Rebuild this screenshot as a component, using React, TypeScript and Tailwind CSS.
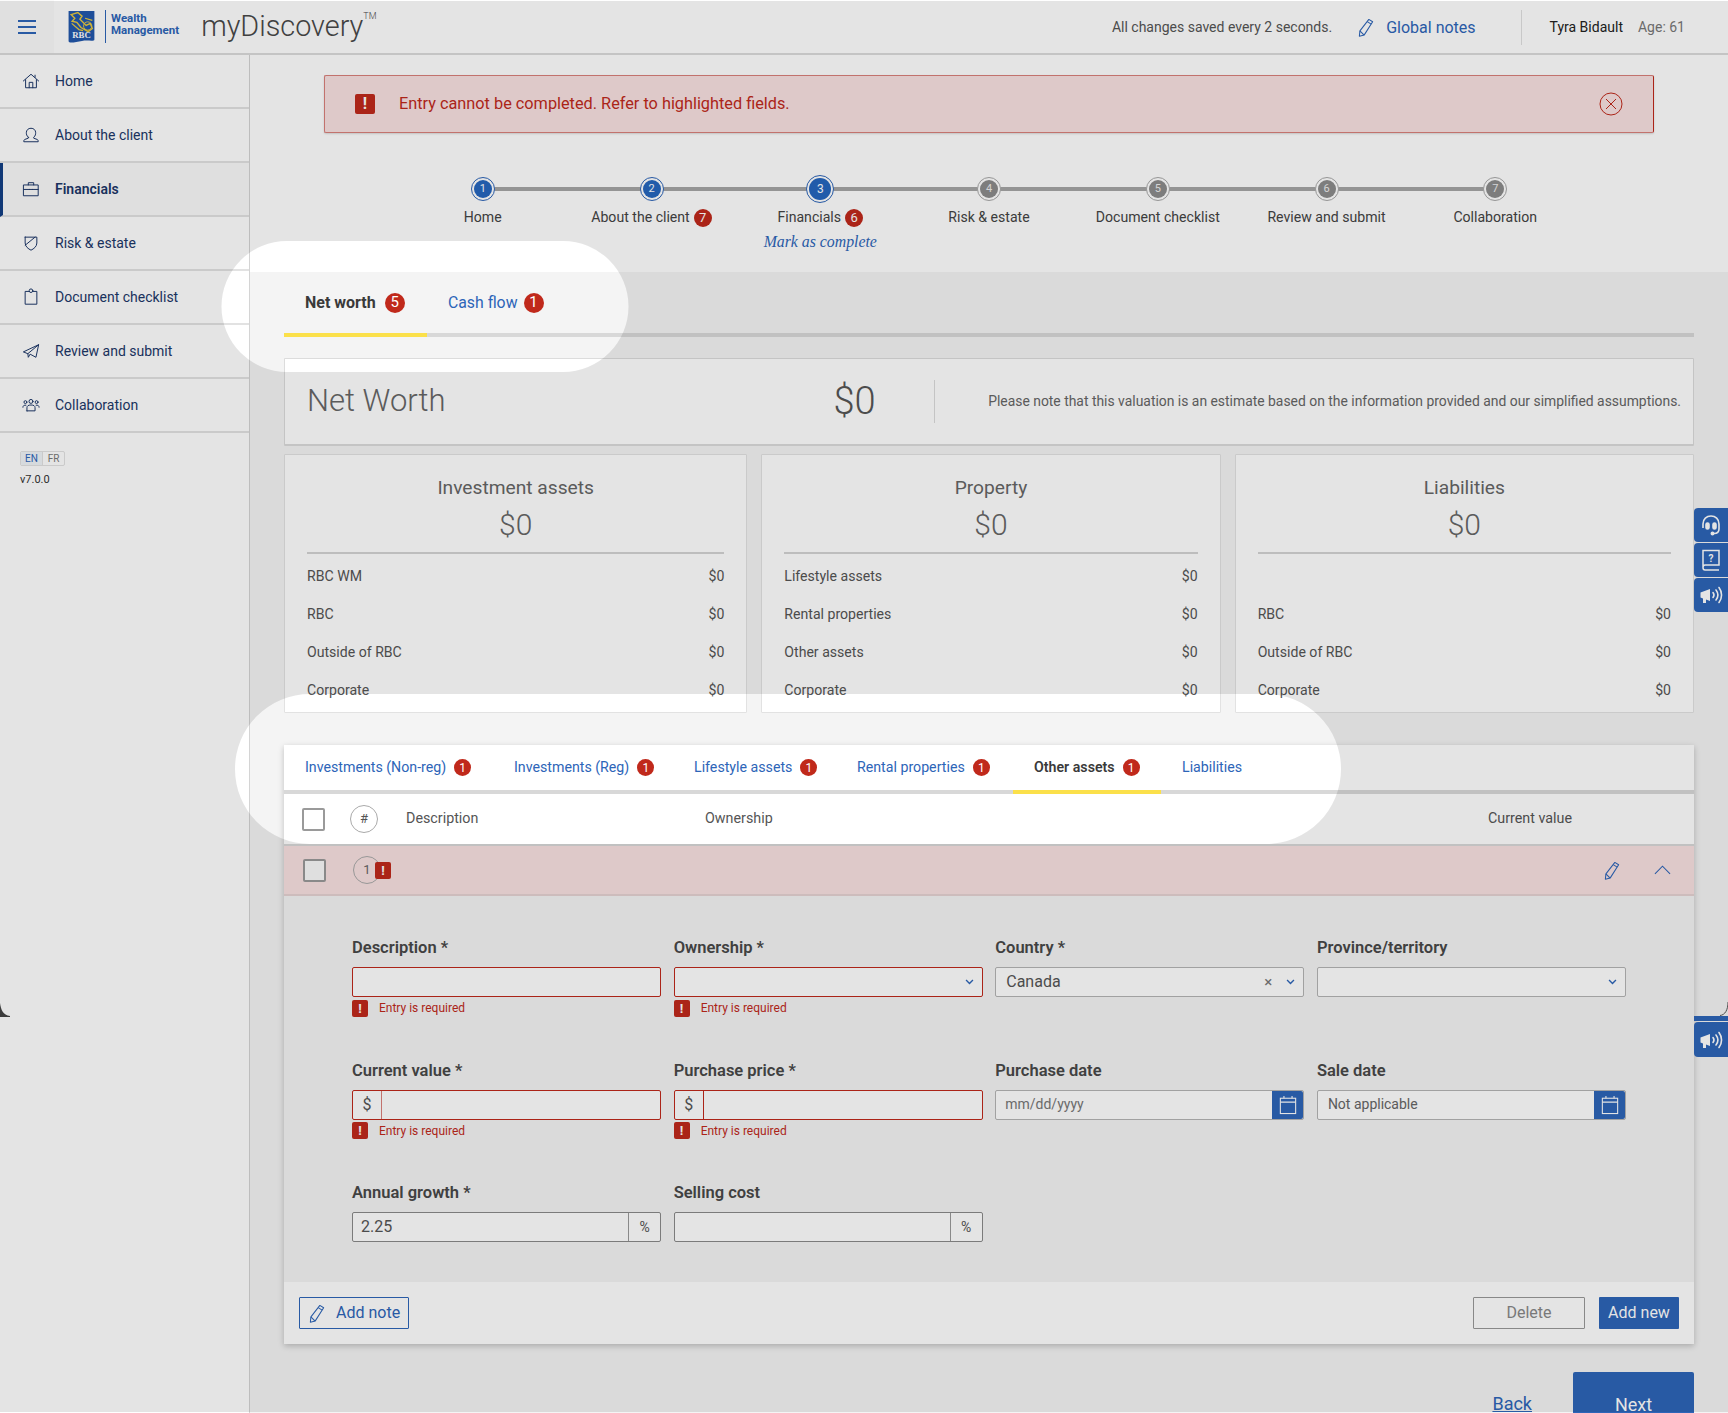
import React from "react";

const BLUE = "#2d65b8";

function Badge({ n, size = "md" }: { n: number; size?: "md" | "sm" }) {
  return (
    <span
      className={
        size === "md"
          ? "inline-flex h-5 w-5 items-center justify-center rounded-full bg-[#c0291b] text-[15px] font-normal leading-none text-white"
          : "inline-flex h-[17px] w-[17px] items-center justify-center rounded-full bg-[#c0291b] text-[12px] font-normal leading-none text-white"
      }
    >
      {n}
    </span>
  );
}

function ErrIcon({ cls }: { cls: string }) {
  return (
    <span className={`inline-flex items-center justify-center rounded-[2px] bg-[#c0291b] font-bold leading-none text-white ${cls}`}>!</span>
  );
}

function Pencil({ cls, color = BLUE }: { cls: string; color?: string }) {
  return (
    <svg viewBox="0 0 18 20" className={cls} fill="none" stroke={color} strokeWidth="1.1" strokeLinejoin="round">
      <path d="M12 1.5 16 4 7 18 2 19.2 2.6 13.5 12 1.5Z" />
      <path d="M10.3 3.8 14.4 6.4" />
      <path d="M2.6 13.5 7 18" />
    </svg>
  );
}

function Chevron({ cls }: { cls?: string }) {
  return (
    <svg viewBox="0 0 10 7" className={`h-[6px] w-[9px] ${cls ?? ""}`} fill="none" stroke={BLUE} strokeWidth="1.6">
      <path d="M1 1.2 5 5.2 9 1.2" />
    </svg>
  );
}

function Calendar() {
  return (
    <span className="flex h-full w-[31px] items-center justify-center rounded-r-[2px] bg-[#2d65b8]">
      <svg viewBox="0 0 20 22" className="h-[20px] w-[18px]" fill="none" stroke="#fff" strokeWidth="1.2">
        <rect x="1.5" y="3.5" width="17" height="17" />
        <path d="M1.5 7.8H18.5M5.5 1V3.5M14.5 1V3.5" />
      </svg>
    </span>
  );
}

const navIconProps = { viewBox: "0 0 20 20", className: "h-[18px] w-[18px] shrink-0", fill: "none", stroke: "#1c3768", strokeWidth: 1.1, strokeLinejoin: "round" as const, strokeLinecap: "round" as const };

const navIcons: Record<string, React.ReactNode> = {
  home: (
    <svg {...navIconProps}>
      <path d="M1.5 10 10 2.5 18.5 10M4 8.5V17.5H16V8.5M8 17.5V11.5H12V17.5M14.5 3.5V6" />
    </svg>
  ),
  person: (
    <svg {...navIconProps}>
      <path d="M7 12.5C5 11 4.8 8.8 4.8 7.5 4.8 4.5 7 2.5 10 2.5S15.2 4.5 15.2 7.5C15.2 8.8 15 11 13 12.5V13.5L17 15C17.8 15.4 18 16 18 17.5H2C2 16 2.2 15.4 3 15L7 13.5V12.5Z" />
    </svg>
  ),
  brief: (
    <svg {...navIconProps}>
      <rect x="2" y="5.5" width="16" height="12" />
      <path d="M7 5.5V3H13V5.5M2 10.5H8.5M11.5 10.5H18M8.5 10.5H11.5" />
    </svg>
  ),
  shield: (
    <svg {...navIconProps}>
      <path d="M3.5 3.5H16.5V10C16.5 14 13 16.5 10 18 7 16.5 3.5 14 3.5 10V3.5Z" />
      <path d="M3.5 12.5 14.5 3.5" />
    </svg>
  ),
  clip: (
    <svg {...navIconProps}>
      <path d="M7.5 3.8H3.5V18H16.5V3.8H12.5" />
      <circle cx="10" cy="3" r="2" />
    </svg>
  ),
  plane: (
    <svg {...navIconProps}>
      <path d="M18.5 3 1.5 11 6.5 13 18.5 3 15.5 17 9 13.5 7 17 6.5 13" />
    </svg>
  ),
  people: (
    <svg {...navIconProps}>
      <circle cx="10" cy="6" r="2.2" />
      <circle cx="3.8" cy="6.8" r="1.6" />
      <circle cx="16.2" cy="6.8" r="1.6" />
      <path d="M5.5 16.5V13C5.5 11 7 10 10 10S14.5 11 14.5 13V16.5H5.5ZM1 12.5C1 10.6 2.3 10 4.3 10.2M19 12.5C19 10.6 17.7 10 15.7 10.2" />
    </svg>
  ),
};

const navItems = [
  ["Home", "home"],
  ["About the client", "person"],
  ["Financials", "brief"],
  ["Risk & estate", "shield"],
  ["Document checklist", "clip"],
  ["Review and submit", "plane"],
  ["Collaboration", "people"],
];

function Logo() {
  return (
    <svg viewBox="0 0 26 31" className="h-[32px] w-[28px] shrink-0">
      <path d="M0 0H25V27.5C25 30 19 28 13 29 7 30 0 32 0 29V0Z" fill="#2258ac" />
      <path d="M2.5 3.5 9 1.5 13 5 11 8 17 14 21 12 23 17 19 20 12 16 8 11 3.5 10 6 7 2.5 3.5Z" fill="none" stroke="#e9c93f" strokeWidth="1.4" />
      <path d="M3 12 10 18 14 19M16 7 23 9" fill="none" stroke="#e9c93f" strokeWidth="1.2" />
      <circle cx="18.5" cy="14.5" r="4" fill="none" stroke="#e9c93f" strokeWidth="0.9" />
      <text x="12.5" y="26.5" textAnchor="middle" fill="#fff" fontSize="8.5" fontWeight="700" fontFamily="Liberation Serif, serif">RBC</text>
    </svg>
  );
}

const steps = [
  { n: 1, label: "Home", state: "done" },
  { n: 2, label: "About the client", state: "done", badge: 7 },
  { n: 3, label: "Financials", state: "active", badge: 6, mark: true },
  { n: 4, label: "Risk & estate", state: "todo" },
  { n: 5, label: "Document checklist", state: "todo" },
  { n: 6, label: "Review and submit", state: "todo" },
  { n: 7, label: "Collaboration", state: "todo" },
];

function StepDot({ n, state }: { n: number; state: string }) {
  if (state === "active")
    return (
      <span className="flex h-7 w-7 items-center justify-center rounded-full border border-[#2d65b8] bg-white">
        <span className="flex h-[22px] w-[22px] items-center justify-center rounded-full bg-[#2666bf] text-[12px] text-white">{n}</span>
      </span>
    );
  if (state === "done")
    return (
      <span className="flex h-6 w-6 items-center justify-center rounded-full border border-[#2d65b8] bg-white">
        <span className="flex h-[18px] w-[18px] items-center justify-center rounded-full bg-[#2666bf] text-[11px] text-white">{n}</span>
      </span>
    );
  return (
    <span className="flex h-6 w-6 items-center justify-center rounded-full border border-[#a8a8a8] bg-white">
      <span className="flex h-[18px] w-[18px] items-center justify-center rounded-full bg-[#8c8c8c] text-[11px] text-[#eee]">{n}</span>
    </span>
  );
}

function SummaryCard({ title, rows }: { title: string; rows: [string, boolean][] }) {
  return (
    <div className="h-[259px] rounded-[1px] border border-[#e2e2e2] bg-white px-[22px]">
      <div className="mt-[20px] text-center text-[19.2px] leading-[26px] text-[#666]">{title}</div>
      <div className="mt-[5px] text-center text-[30px] font-light leading-[38px] text-[#666]">$0</div>
      <div className="mt-[8px] h-[2px] bg-[#d4d4d4]" />
      <div className="mt-[4px]">
        {rows.map(([label, show], i) => (
          <div key={i} className="flex h-[38px] items-center justify-between text-[14.1px] text-[#555]">
            {show ? (
              <>
                <span>{label}</span>
                <span>$0</span>
              </>
            ) : null}
          </div>
        ))}
      </div>
    </div>
  );
}

const lowerTabs: { label: string; w: string; badge: boolean; active?: boolean }[] = [
  { label: "Investments (Non-reg)", w: "w-[209px]", badge: true },
  { label: "Investments (Reg)", w: "w-[180px]", badge: true },
  { label: "Lifestyle assets", w: "w-[163px]", badge: true },
  { label: "Rental properties", w: "w-[177px]", badge: true },
  { label: "Other assets", w: "w-[148px]", badge: true, active: true },
  { label: "Liabilities", w: "w-[120px]", badge: false },
];

function Label({ text, req }: { text: string; req?: boolean }) {
  return (
    <div className="h-6 text-[16.5px] font-semibold leading-6 text-[#484848]">
      {text}
      {req ? " *" : ""}
    </div>
  );
}

function ErrorLine() {
  return (
    <div className="mt-[2px] flex h-[18px] items-center">
      <ErrIcon cls="h-[17px] w-[16px] text-[13px]" />
      <span className="ml-[11px] text-[12px] text-[#c0291b]">Entry is required</span>
    </div>
  );
}

function Box({ error, children, dark }: { error?: boolean; children?: React.ReactNode; dark?: boolean }) {
  return (
    <div
      className={`mt-[7px] flex h-[30px] items-center rounded-[2px] border bg-white text-[16px] text-[#555] ${
        error ? "border-[#c0291b]" : dark ? "border-[#8a8a8a]" : "border-[#b4b4b4]"
      }`}
    >
      {children}
    </div>
  );
}

function Speaker() {
  return (
    <svg viewBox="0 0 24 24" className="h-[24px] w-[24px]" fill="none" stroke="#fff" strokeWidth="1.6" strokeLinecap="round">
      <path d="M1.5 9.5 11 6V18L7 16.5V20H4V15.5L1.5 14.5Z" fill="#fff" stroke="none" />
      <path d="M14 9.5C15.2 11 15.2 13 14 14.5M17 7C19.3 10 19.3 14 17 17M20 4.5C23.4 9 23.4 15 20 19.5" />
    </svg>
  );
}

export default function App() {
  return (
    <div className="relative h-[1413px] w-full overflow-hidden bg-white font-[Roboto,sans-serif] text-[#333]">
      {/* Header */}
      <header className="flex h-[55px] items-center border-b-2 border-[#dcdcdc] bg-white">
        <div className="flex h-full w-[54px] flex-col items-center justify-center gap-[4px] bg-[#fbfbfb]">
          <span className="h-[2px] w-[18px] bg-[#2d65b8]" />
          <span className="h-[2px] w-[18px] bg-[#2d65b8]" />
          <span className="h-[2px] w-[18px] bg-[#2d65b8]" />
        </div>
        <div className="ml-[14px]">
          <Logo />
        </div>
        <span className="ml-[9px] h-[33px] w-px bg-[#2d65b8]" />
        <div className="-mt-[5px] ml-[5px] text-[11.5px] font-bold leading-[12.5px] text-[#2d65b8]">
          <div>Wealth</div>
          <div>Management</div>
        </div>
        <div className="-mt-[2px] ml-[22px] flex items-start text-[#484848]">
          <span className="text-[28.8px] font-light leading-[36px]">myDiscovery</span>
          <span className="mt-[2px] text-[9px] font-light leading-[12px]">TM</span>
        </div>
        <div className="ml-auto flex items-center pr-[43px] pt-[2px]">
          <span className="text-[14px] text-[#555]">All changes saved every 2 seconds.</span>
          <Pencil cls="ml-[25px] h-[19px] w-[18px]" />
          <span className="ml-[11px] text-[16px] text-[#2d65b8]">Global notes</span>
          <span className="ml-[45px] h-[35px] w-px bg-[#e0e0e0]" />
          <span className="ml-[28px] text-[14px] text-[#222]">Tyra Bidault</span>
          <span className="ml-[15px] text-[14px] text-[#777]">Age: 61</span>
        </div>
      </header>

      <div className="flex">
        {/* Sidebar */}
        <aside className="w-[250px] shrink-0 border-r border-[#d4d4d4] bg-white">
          {navItems.map(([label, icon]) => {
            const active = label === "Financials";
            return (
              <div
                key={label}
                className={`flex h-[54px] items-center border-b-2 border-[#e2e2e2] text-[14px] text-[#1c3768] ${
                  active ? "border-l-[3px] border-l-[#123f85] bg-[#fafafa] pl-[19px] font-semibold" : "pl-[22px]"
                }`}
              >
                {navIcons[icon]}
                <span className="ml-[15px]">{label}</span>
              </div>
            );
          })}
          <div className="ml-[20px] mt-[18px] flex h-[15px] w-[45px] overflow-hidden rounded-[2px] border border-[#e2e2e2] text-[10px] leading-[13px]">
            <span className="flex-1 bg-[#f0f4f8] text-center text-[#2d65b8]">EN</span>
            <span className="flex-1 border-l border-[#e2e2e2] text-center text-[#777]">FR</span>
          </div>
          <div className="ml-[20px] mt-[6px] text-[11px] text-[#333]">v7.0.0</div>
        </aside>

        {/* Main */}
        <main className="min-w-0 flex-1 bg-white">
          <div className="px-[74px] pt-[20px]">
            <div className="flex h-[58px] items-center rounded-[2px] border border-[#d9807a] border-r-[#c0291b] bg-[#f9e1e1] pl-[30px] pr-[30px] shadow-[0_1px_2px_rgba(0,0,0,0.15)]">
              <ErrIcon cls="h-5 w-5 text-[16px]" />
              <span className="ml-[24px] text-[16.3px] text-[#c0291b]">Entry cannot be completed. Refer to highlighted fields.</span>
              <svg viewBox="0 0 24 24" className="ml-auto h-[24px] w-[24px]" fill="none" stroke="#c0291b" strokeWidth="1">
                <circle cx="12" cy="12" r="11" />
                <path d="M7 7 17 17M17 7 7 17" />
              </svg>
            </div>
          </div>

          {/* Stepper */}
          <div className="relative mt-[42px] flex h-[97px] justify-center">
            <div className="relative flex">
              <div className="absolute left-[84px] right-[84px] top-[12px] h-1 bg-[#a6a6a6]" />
              {steps.map((s) => (
                <div key={s.n} className="relative flex w-[168.75px] flex-col items-center">
                  <div className="flex h-7 items-center">
                    <StepDot n={s.n} state={s.state} />
                  </div>
                  <div className="mt-[5px] flex h-5 items-center gap-1 whitespace-nowrap text-[14.1px] text-[#444]">
                    {s.label}
                    {s.badge ? (
                      <span className="inline-flex h-[18px] w-[18px] items-center justify-center rounded-full bg-[#c0291b] text-[13px] text-white">{s.badge}</span>
                    ) : null}
                  </div>
                  {s.mark ? <div className="mt-1 font-['Liberation_Serif',serif] text-[15.8px] italic leading-5 text-[#2d65b8]">Mark as complete</div> : null}
                </div>
              ))}
            </div>
          </div>

          {/* Content */}
          <section className="bg-[#f4f4f4] px-[34px]">
            <div className="flex h-[65px] border-b-4 border-[#d8d8d8]">
              <div className="-mb-1 flex h-[65px] w-[143px] items-center gap-[9px] border-b-4 border-[#fbe04a] pl-[21px] text-[16px] font-bold text-[#3a3a3a]">
                Net worth <Badge n={5} />
              </div>
              <div className="flex h-[61px] items-center gap-[6px] pl-[21px] text-[15.8px] text-[#2d65b8]">
                Cash flow <Badge n={1} />
              </div>
            </div>

            <div className="mt-[21px] flex h-[88px] items-center rounded-[1px] border border-b-2 border-[#dcdcdc] bg-white">
              <span className="ml-[22px] text-[31px] font-light text-[#666]">Net Worth</span>
              <span className="ml-[388px] text-[38px] font-light text-[#555]">$0</span>
              <span className="ml-[58px] h-[43px] w-px bg-[#dcdcdc]" />
              <span className="ml-auto mr-[12px] text-[13.9px] text-[#666]">
                Please note that this valuation is an estimate based on the information provided and our simplified assumptions.
              </span>
            </div>

            <div className="mt-[8px] grid grid-cols-[463fr_459fr_459fr] gap-[14px]">
              <SummaryCard title="Investment assets" rows={[["RBC WM", true], ["RBC", true], ["Outside of RBC", true], ["Corporate", true]]} />
              <SummaryCard title="Property" rows={[["Lifestyle assets", true], ["Rental properties", true], ["Other assets", true], ["Corporate", true]]} />
              <SummaryCard title="Liabilities" rows={[["", false], ["RBC", true], ["Outside of RBC", true], ["Corporate", true]]} />
            </div>

            {/* Table */}
            <div className="mt-[32px] shadow-[0_2px_6px_rgba(0,0,0,0.22)]">
              <div className="flex h-[49px] border-b-4 border-[#d8d8d8] bg-white">
                {lowerTabs.map((t) => (
                  <div
                    key={t.label}
                    className={`-mb-1 flex h-[49px] items-center gap-2 border-b-4 pl-[21px] text-[14.2px] ${t.w} ${
                      t.active ? "border-[#fbe04a] font-semibold text-[#3a3a3a]" : "border-transparent text-[#2d65b8]"
                    }`}
                  >
                    {t.label}
                    {t.badge ? <Badge n={1} size="sm" /> : null}
                  </div>
                ))}
              </div>

              <div className="flex h-[52px] items-center border-b-2 border-[#d8d8d8] bg-white pl-[18px] text-[14.3px] text-[#555]">
                <span className="h-[23px] w-[23px] rounded-[2px] border-2 border-[#9a9a9a] bg-white" />
                <span className="ml-[25px] flex h-7 w-7 items-center justify-center rounded-full border border-[#aaa] text-[13px]">#</span>
                <span className="ml-[28px] w-[299px]">Description</span>
                <span>Ownership</span>
                <span className="ml-auto mr-[122px]">Current value</span>
              </div>

              <div className="flex h-[50px] items-center border-b-2 border-[#e6d3d3] bg-[#f9e1e1] pl-[19px]">
                <span className="h-[23px] w-[23px] rounded-[2px] border-2 border-[#9a9a9a] bg-[#fafafa]" />
                <span className="relative ml-[27px] flex h-7 w-7 items-center justify-center rounded-full border border-[#aaa] text-[13px] text-[#666]">
                  1
                  <ErrIcon cls="absolute -right-[11px] top-[5px] h-[17px] w-[16px] text-[13px]" />
                </span>
                <Pencil cls="ml-auto h-[19px] w-[18px]" />
                <svg viewBox="0 0 18 10" className="ml-[33px] mr-[23px] h-[10px] w-[17px]" fill="none" stroke={BLUE} strokeWidth="1.1">
                  <path d="M1 9 9 1 17 9" />
                </svg>
              </div>

              <div className="grid grid-cols-4 grid-rows-[122.5px_122.5px_auto] gap-x-[12.5px] bg-[#f4f4f4] px-[68px] pb-[40px] pt-[40px]">
                <div>
                  <Label text="Description" req />
                  <Box error />
                  <ErrorLine />
                </div>
                <div>
                  <Label text="Ownership" req />
                  <Box error>
                    <Chevron cls="ml-auto mr-[8px]" />
                  </Box>
                  <ErrorLine />
                </div>
                <div>
                  <Label text="Country" req />
                  <Box>
                    <span className="ml-[10px]">Canada</span>
                    <span className="ml-auto text-[15px] leading-none text-[#777]">×</span>
                    <Chevron cls="ml-[14px] mr-[8px]" />
                  </Box>
                </div>
                <div>
                  <Label text="Province/territory" />
                  <Box>
                    <Chevron cls="ml-auto mr-[8px]" />
                  </Box>
                </div>

                <div>
                  <Label text="Current value" req />
                  <Box error>
                    <span className="flex h-full w-[29px] items-center justify-center border-r border-[#d9807a]">$</span>
                  </Box>
                  <ErrorLine />
                </div>
                <div>
                  <Label text="Purchase price" req />
                  <Box error>
                    <span className="flex h-full w-[29px] items-center justify-center border-r border-[#c0291b]">$</span>
                  </Box>
                  <ErrorLine />
                </div>
                <div>
                  <Label text="Purchase date" />
                  <Box>
                    <span className="ml-[9px] text-[14px] text-[#777]">mm/dd/yyyy</span>
                    <span className="ml-auto h-full">
                      <Calendar />
                    </span>
                  </Box>
                </div>
                <div>
                  <Label text="Sale date" />
                  <Box>
                    <span className="ml-[10px] text-[14px] text-[#666]">Not applicable</span>
                    <span className="ml-auto h-full">
                      <Calendar />
                    </span>
                  </Box>
                </div>

                <div>
                  <Label text="Annual growth" req />
                  <Box dark>
                    <span className="ml-[8px]">2.25</span>
                    <span className="ml-auto flex h-full w-[32px] items-center justify-center border-l border-[#9a9a9a] text-[14px]">%</span>
                  </Box>
                </div>
                <div>
                  <Label text="Selling cost" />
                  <Box dark>
                    <span className="ml-auto flex h-full w-[32px] items-center justify-center border-l border-[#9a9a9a] text-[14px]">%</span>
                  </Box>
                </div>
              </div>

              <div className="flex h-[62px] items-center bg-white pl-[15px] pr-[15px]">
                <button className="flex h-8 w-[110px] items-center rounded-[1px] border border-[#2d65b8] pl-[8px] text-[16px] text-[#2d65b8]">
                  <Pencil cls="h-[19px] w-[18px]" />
                  <span className="ml-[10px]">Add note</span>
                </button>
                <button className="ml-auto h-8 w-[112px] rounded-[1px] border border-[#999] text-[16px] text-[#888]">Delete</button>
                <button className="ml-[14px] h-8 w-[80px] rounded-[1px] bg-[#2d65b8] text-[16px] text-white">Add new</button>
              </div>
            </div>

            <div className="mt-[28px] flex justify-end pb-[20px]">
              <a className="mr-[41px] mt-[21px] text-[18px] leading-[22px] text-[#2d65b8] underline">Back</a>
              <button className="h-[64px] w-[121px] rounded-t-[2px] bg-[#2d65b8] text-[18px] text-white">Next</button>
            </div>
          </section>
        </main>
      </div>

      {/* Floating side tabs */}
      <div className="absolute left-[1694px] top-[508px] flex flex-col gap-px">
        <div className="flex h-[34px] w-[34px] items-center justify-center rounded-l-[4px] bg-[#2d65b8]">
          <svg viewBox="0 0 24 24" className="h-[24px] w-[24px]" fill="none" stroke="#fff" strokeWidth="1.6">
            <path d="M4 15V11C4 6 7.5 3 12 3S20 6 20 11V16C20 19 18 20.5 15 20.5" />
            <rect x="7" y="10" width="3" height="6" rx="1.5" fill="#fff" />
            <rect x="14" y="10" width="3" height="6" rx="1.5" fill="#fff" />
            <circle cx="13.5" cy="20.5" r="1.2" fill="#fff" />
          </svg>
        </div>
        <div className="flex h-[34px] w-[34px] items-center justify-center rounded-l-[4px] bg-[#2d65b8]">
          <svg viewBox="0 0 24 24" className="h-[24px] w-[24px]" fill="none" stroke="#fff" strokeWidth="1.5">
            <path d="M4 19.5V2.5H20V17H6C4.8 17 4 18 4 19.5S4.8 22 6 22H20" />
            <text x="12" y="13.5" textAnchor="middle" fontSize="10" fontWeight="700" fill="#fff" stroke="none">?</text>
          </svg>
        </div>
        <div className="flex h-[34px] w-[34px] items-center justify-center rounded-l-[4px] bg-[#2d65b8]">
          <Speaker />
        </div>
      </div>

      {/* Stitched capture artefacts */}
      <svg viewBox="0 0 10 14" className="absolute left-0 top-[1003px] h-[14px] w-[10px]">
        <path d="M0 0C1 7 3 12 10 13V14H0Z" fill="#444" />
      </svg>
      <svg viewBox="0 0 8 16" className="absolute left-[1720px] top-[1000px] h-4 w-2" fill="none" stroke="#555" strokeWidth="1">
        <path d="M8 2C8 10 5 15 0 15.5" />
      </svg>
      <div className="absolute left-[1694px] top-[1016px] h-[5px] w-[34px] bg-[#2d65b8]" />
      <div className="absolute left-[1694px] top-[1022px] flex h-[35px] w-[34px] items-center justify-center rounded-l-[4px] bg-[#2d65b8]">
        <Speaker />
      </div>

      {/* Dimming layer with two spotlight cut-outs */}
      <svg className="pointer-events-none absolute left-0 top-0 h-[1413px] w-[1728px]" viewBox="0 0 1728 1413">
        <path
          fillRule="evenodd"
          fill="#000"
          fillOpacity="0.106"
          d="M0 1H1728V1412H0Z M287 241H563A65.5 65.5 0 0 1 563 372H287A65.5 65.5 0 0 1 287 241Z M310 694H1266A75 75 0 0 1 1266 844H310A75 75 0 0 1 310 694Z"
        />
      </svg>
    </div>
  );
}
